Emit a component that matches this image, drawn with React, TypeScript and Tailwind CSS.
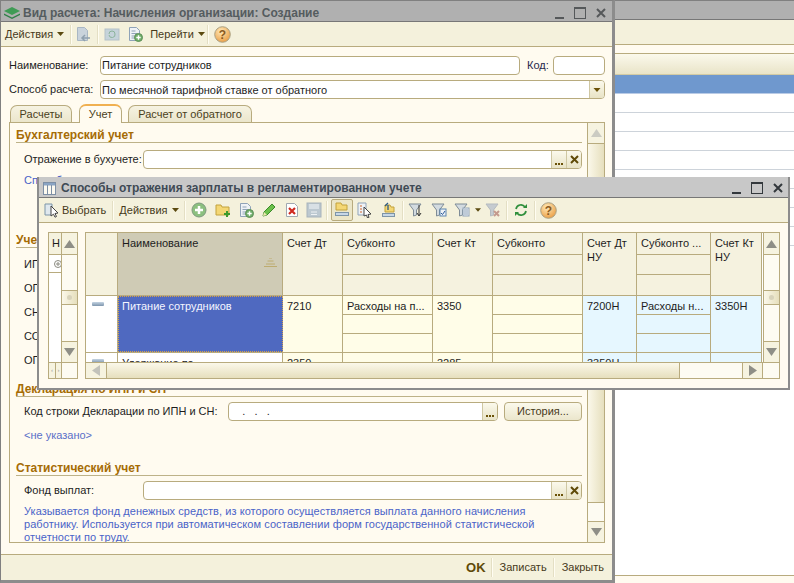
import React from "react";

const Caret = ({ c = "#5b4a10", w = 7 }: { c?: string; w?: number }) => (
  <svg width={w} height="4" viewBox="0 0 7 4" className="shrink-0"><path d="M0 0h7L3.500 4z" fill={c} /></svg>
);
const Sep = ({ l, r }: { l: number; r: number }) => (
  <div className="w-[2px] h-[19px] shrink-0 bg-[#e4dfc4] border-r border-[#fffdf2]" style={{ marginLeft: l, marginRight: r }} />
);
const Help = () => (
  <svg width="17" height="17" viewBox="0 0 17 17" className="shrink-0">
    <defs><radialGradient id="hg" cx="0.4" cy="0.3" r="0.8"><stop offset="0" stopColor="#ffe9b8" /><stop offset="1" stopColor="#e8973a" /></radialGradient></defs>
    <circle cx="8.500" cy="8.500" r="7.800" fill="url(#hg)" stroke="#a9a184" />
    <text x="8.500" y="13" textAnchor="middle" fontSize="12" fontWeight="700" fill="#8a5a20" fontFamily="Liberation Sans">?</text>
  </svg>
);
const Doc = ({ c = "#8fa3b8", f = "#eef2f6" }: { c?: string; f?: string }) => (
  <path d="M2.500 1.500h7l3 3v10h-10z" fill={f} stroke={c} />
);
const Lines = ({ c = "#8fa3b8" }: { c?: string }) => <path d="M4.500 5h4M4.500 7.500h6M4.500 10h6M4.500 12h4" stroke={c} fill="none" />;
const I = ({ children, w = 16 }: { children: React.ReactNode; w?: number }) => (
  <svg width={w} height="16" viewBox={`0 0 ${w} 16`} className="shrink-0">{children}</svg>
);
const Plus = ({ x = 11.5, y = 11.5 }: { x?: number; y?: number }) => (
  <g><circle cx={x} cy={y} r="4" fill="#6fae6a" stroke="#5d8f58" /><path d={`M${x - 2.2} ${y}h4.400M${x} ${y - 2.2}v4.400`} stroke="#fff" strokeWidth="1.400" /></g>
);
const Funnel = ({ c = "#7f8c97" }: { c?: string }) => <path d="M1 2h12L8.500 8v5l-3 1V8z" fill="#d3dbe0" stroke={c} />;

const border = "border-[#b8ab7e]";

const Field = ({ value, dots, x, w, className = "" }: { value?: string; dots?: boolean; x?: boolean; w?: number; className?: string }) => (
  <div className={`h-[19px] flex items-stretch bg-white border border-[#b8ab7e] rounded-[4px] overflow-hidden ${className}`} style={w ? { width: w } : undefined}>
    <div className="flex-1 min-w-0 pl-[1px] leading-[17px] text-[#1d1d1d] whitespace-pre">{value}</div>
    {dots && (
      <div className="w-[15px] border-l border-[#cfc7a2] bg-gradient-to-b from-[#fbf9ec] to-[#e8e3c6] flex items-end justify-center pb-[3px] gap-[1px]">
        <span className="w-[2px] h-[2px] bg-[#6b5208]" /><span className="w-[2px] h-[2px] bg-[#6b5208]" /><span className="w-[2px] h-[2px] bg-[#6b5208]" />
      </div>
    )}
    {x && (
      <div className="w-[15px] border-l border-[#cfc7a2] bg-gradient-to-b from-[#fbf9ec] to-[#e8e3c6] flex items-center justify-center">
        <svg width="9" height="9" viewBox="0 0 9 9"><path d="M1 1l7 7M8 1L1 8" stroke="#5f4a08" strokeWidth="2" /></svg>
      </div>
    )}
  </div>
);

const Heading = ({ children, className = "" }: { children: React.ReactNode; className?: string }) => (
  <div className={`h-[15px] border-b border-[#bdb288] font-bold text-[12px] text-[#a66c05] leading-[15px] whitespace-nowrap ${className}`}>{children}</div>
);

const Tri = ({ up, c = "#8e8e86" }: { up?: boolean; c?: string }) => (
  <svg width="11" height="8" viewBox="0 0 11 8"><path d={up ? "M5.500 0L11 8H0z" : "M0 0h11L5.500 8z"} fill={c} /></svg>
);

const VScroll = () => (
  <div className={`w-[16px] shrink-0 flex flex-col border-l ${border}`}>
    <div className={`h-[22px] shrink-0 flex items-center justify-center border-b ${border} bg-[#f6f3e0]`}><Tri up /></div>
    <div className="h-[35px] shrink-0 bg-[#fdfbf2]" />
    <div className={`h-[15px] shrink-0 bg-gradient-to-r from-[#fbf8ea] to-[#e6dfbd] border-y ${border} flex items-center justify-center`}>
      <span className="w-[5px] h-[5px] rounded-full bg-[#d8d3bb]" />
    </div>
    <div className={`flex-1 bg-[#fdfbf2] border-b ${border}`} />
    <div className="h-[20px] shrink-0 flex items-center justify-center bg-[#f6f3e0]"><Tri /></div>
  </div>
);

const WinBtns = ({ c = "#55585a" }: { c?: string }) => (
  <div className="flex items-center gap-[10px]">
    <svg width="9" height="12" viewBox="0 0 9 12"><rect x="0" y="10" width="9" height="2" fill={c} /></svg>
    <svg width="12" height="12" viewBox="0 0 12 12"><rect x=".5" y=".5" width="11" height="11" fill="none" stroke={c} /><rect x="0" y="0" width="12" height="2" fill={c} /></svg>
    <svg width="10" height="10" viewBox="0 0 10 10"><path d="M1 1l8 8M9 1L1 9" stroke={c} strokeWidth="2" /></svg>
  </div>
);

const Tab = ({ label, active, w, ml }: { label: string; active?: boolean; w: number; ml: number }) => (
  <div
    className={`flex items-center justify-center border border-b-0 ${border} rounded-t-[7px] ${active ? "h-[19px] bg-[#fffbf0] border-t-2 border-t-[#f0b050] -mb-px z-10" : "h-[17px] bg-gradient-to-b from-[#f6f3e2] to-[#ebe6cc]"} text-[#4a3f20]`}
    style={{ width: w, marginLeft: ml }}
  >
    {label}
  </div>
);

const MainWindow = () => (
  <div className="absolute left-0 top-0 w-[615px] h-[583px] flex flex-col bg-[#fffbf0] border-l border-[#808080] border-r-[3px] border-r-[#8c8c8c] border-b-[3px] border-b-[#8c8c8c] border-t border-t-[#808080] overflow-hidden">
    <div className="h-[21px] shrink-0 bg-[#b0b0b0] flex items-center pl-[2px] pr-[6px] pt-[3px] border-b border-[#777]">
      <svg width="18" height="12" viewBox="0 0 18 12" className="shrink-0"><path d="M9 0l8 4-8 4-8-4z" fill="#3f9b55" /><path d="M1 6.500l8 4 8-4v1.500l-8 4-8-4z" fill="#2f7f47" /></svg>
      <div className="ml-[2px] font-bold text-[#555c5f] text-[12px] leading-4 whitespace-nowrap flex-1">Вид расчета: Начисления организации: Создание</div>
      <WinBtns />
    </div>
    <div className="h-[25px] shrink-0 bg-[#f4f1dc] border-b border-[#b8ab7e] flex items-center pl-[4px] text-[#46391a]">
      <span>Действия</span><span className="ml-[4px]"><Caret /></span>
      <Sep l={6} r={3} />
      <I><Doc c="#a9b7c4" f="#c9d3dc" /><path d="M7 12h8M10 9l-3 3 3 3" stroke="#8fa0ae" fill="none" strokeWidth="1.500" /></I>
      <Sep l={6} r={5} />
      <I><rect x="1" y="3" width="14" height="11" fill="#c5d3da" stroke="#b3c1c8" /><path d="M5 8a3 3 0 0 1 6 0M11 8a3 3 0 0 1-6 1" stroke="#8bb39a" fill="none" /></I>
      <span className="ml-[7px]"><I><Doc /><Lines /><Plus /></I></span>
      <span className="ml-[7px]">Перейти</span><span className="ml-[4px]"><Caret /></span>
      <Sep l={2} r={5} />
      <Help />
    </div>
    <div className="flex-1 min-h-0 flex flex-col pl-[8px] pr-[7px] pt-[9px] text-[#1d1d1d]">
      <div className="h-[19px] flex items-center">
        <span className="w-[91px] shrink-0">Наименование:</span>
        <Field value="Питание сотрудников" className="flex-1" />
        <span className="ml-[7px] w-[26px] shrink-0 text-[#26264a]">Код:</span>
        <Field w={52} />
      </div>
      <div className="h-[19px] mt-[5px] flex items-center">
        <span className="w-[91px] shrink-0">Способ расчета:</span>
        <div className="flex-1 h-[19px] flex bg-white border border-[#b8ab7e] rounded-[4px] overflow-hidden">
          <div className="flex-1 pl-[1px] leading-[18px]">По месячной тарифной ставке от обратного</div>
          <div className="w-[15px] border-l border-[#cfc7a2] bg-gradient-to-b from-[#fbf9ec] to-[#e8e3c6] flex items-center justify-center"><Caret c="#6b5208" w={8} /></div>
        </div>
      </div>
      <div className="h-[23px] shrink-0 flex items-end">
        <Tab label="Расчеты" w={62} ml={1} />
        <Tab label="Учет" w={43} ml={7} active />
        <Tab label="Расчет от обратного" w={124} ml={6} />
      </div>
      <div className={`w-[596px] h-[421px] shrink-0 flex border ${border} overflow-hidden`}>
        <div className="flex-1 min-w-0 pl-[6px] pr-[5px] overflow-hidden">
          <Heading className="mt-[5px]">Бухгалтерский учет</Heading>
          <div className="h-[19px] mt-[7px] flex items-center pl-[8px]">
            <span className="w-[119px] shrink-0">Отражение в бухучете:</span>
            <Field dots x className="flex-1" />
          </div>
          <div className="mt-[5px] pl-[8px] h-[13px] leading-[13px] text-[#4a63c8] whitespace-nowrap">Способы отражения зарплаты</div>
          <Heading className="mt-[46px]">Учет ИПН и СН</Heading>
          <div className="pl-[8px] mt-[9px] flex flex-col gap-[10px] leading-[14px]">
            <div>ИПН:</div><div>ОПВ:</div><div>СН:</div><div>СО:</div><div>ОППВ:</div>
          </div>
          <Heading className="mt-[15px]">Декларация по ИПН и СН</Heading>
          <div className="h-[19px] mt-[5px] flex items-center pl-[8px]">
            <span className="w-[204px] shrink-0 whitespace-nowrap">Код строки Декларации по ИПН и СН:</span>
            <Field value="    .   .   ." dots className="w-[270px]" />
            <div className={`ml-[6px] flex-1 h-[19px] border ${border} rounded-[4px] bg-gradient-to-b from-[#fbf9ec] to-[#ebe6cc] text-center leading-[17px] text-[#46391a]`}>История...</div>
          </div>
          <div className="mt-[7px] pl-[8px] leading-[14px] text-[#5a6fc8]">&lt;не указано&gt;</div>
          <Heading className="mt-[19px]">Статистический учет</Heading>
          <div className="h-[19px] mt-[5px] flex items-center pl-[8px]">
            <span className="w-[119px] shrink-0">Фонд выплат:</span>
            <Field dots x className="flex-1" />
          </div>
          <div className="mt-[5px] pl-[8px] leading-[13px] tracking-[0.06px] text-[#4a63c8]">
            <div className="whitespace-nowrap">Указывается фонд денежных средств, из которого осуществляется выплата данного начисления</div>
            <div className="whitespace-nowrap">работнику. Используется при автоматическом составлении форм государственной статистической</div>
            <div className="whitespace-nowrap">отчетности по труду.</div>
          </div>
        </div>
        <div className={`w-[17px] shrink-0 flex flex-col border-l ${border}`}>
          <div className={`h-[21px] flex items-center justify-center border-b ${border} bg-[#f6f3e0]`}><Tri up c="#cbcbc2" /></div>
          <div className={`h-[359px] bg-gradient-to-r from-[#fbf8ea] to-[#e6dfbd] border-b ${border}`} />
          <div className={`h-[19px] bg-[#fdfbf2] border-b ${border}`} />
          <div className="flex-1 flex items-center justify-center bg-[#f6f3e0]"><Tri /></div>
        </div>
      </div>
    </div>
    <div className="h-[26px] shrink-0 bg-[#f4f1dc] border-t border-[#b8ab7e] flex items-center justify-end pr-[8px] text-[#46391a]">
      <span className="font-bold text-[13px] text-[#5f4a08]">OK</span>
      <Sep l={5} r={7} />
      <span>Записать</span>
      <Sep l={6} r={7} />
      <span>Закрыть</span>
    </div>
  </div>
);

const BackWindow = () => (
  <div className="absolute left-[615px] top-0 w-[179px] h-[583px] flex flex-col bg-white">
    <div className="h-[20px] bg-[#b0b0b0] border-t border-t-[#808080] border-b border-b-[#777]" />
    <div className="h-[25px] bg-[#f4f1dc] border-b border-[#b8ab7e]" />
    <div className="h-[9px] bg-[#fffbf0] border-b border-[#b8ab7e]" />
    <div className="h-[21px] bg-gradient-to-b from-[#fbf9ec] to-[#e9e4c8] border-b border-[#d3cba4]" />
    <div className="h-[19px] bg-[#6f98ce] border-b border-[#b9cbe6]" />
    {[0, 1, 2, 3, 4, 5, 6, 7].map((i) => (
      <div key={i} className="h-[19px] bg-white border-b border-[#cdd3da]" />
    ))}
    <div className="flex-1" />
    <div className="h-[8px] bg-[#fffbf0] border-t border-[#b8ab7e]" />
  </div>
);

const Cell = ({ w, bg, text, sub, h, head }: { w: number; bg: string; text: string; sub?: boolean; h: number; head?: boolean }) => (
  <div className={`shrink-0 border-r ${border} flex flex-col overflow-hidden`} style={{ width: w, height: h, background: bg }}>
    {sub ? (
      <>
        <div className={`${head ? "h-[22px]" : "h-[19px]"} shrink-0 border-b ${border} pl-[4px] pt-[3px] leading-[14px] whitespace-nowrap`}>{text}</div>
        <div className={`${head ? "h-[20px]" : "h-[19px]"} shrink-0 border-b ${border}`} />
        <div className="flex-1" />
      </>
    ) : (
      <div className="pl-[4px] pt-[3px] leading-[14px]">{text}</div>
    )}
  </div>
);

const hdrBg = "#f5f2df";
const yel = "#fffde8";
const blu = "#e6f7ff";
const cols = [
  { w: 60, h: "Счет Дт", a: "7210", b: "2350", bg: yel },
  { w: 90, h: "Субконто", a: "Расходы на п...", b: "", bg: yel, sub: true },
  { w: 60, h: "Счет Кт", a: "3350", b: "3285", bg: yel },
  { w: 90, h: "Субконто", a: "", b: "", bg: yel, sub: true },
  { w: 54, h: "Счет Дт НУ", a: "7200Н", b: "3350Н", bg: blu },
  { w: 74, h: "Субконто ...", a: "Расходы н...", b: "", bg: blu, sub: true },
  { w: 51, h: "Счет Кт НУ", a: "3350Н", b: "", bg: blu },
];

const Dialog = () => (
  <div className="absolute left-[37px] top-[177px] w-[753px] h-[213px] flex flex-col bg-[#fffbf0] border-2 border-[#8c8c8c] border-t-0 overflow-hidden">
    <div className="h-[21px] shrink-0 bg-[#c8c8c8] border-b border-[#777] flex items-center pl-[4px] pr-[5px] pt-[2px]">
      <svg width="13" height="13" viewBox="0 0 13 13" className="shrink-0"><rect x=".5" y=".5" width="12" height="12" fill="#fdfaf0" stroke="#7d8fa5" /><rect x="1" y="1" width="11" height="2.500" fill="#8aa4c4" /><path d="M4.500 3v9M8.500 3v9" stroke="#7d8fa5" /></svg>
      <div className="ml-[5px] flex-1 font-bold text-[#3f4a55] text-[12px] leading-4 whitespace-nowrap">Способы отражения зарплаты в регламентированном учете</div>
      <WinBtns c="#33383c" />
    </div>
    <div className="h-[25px] shrink-0 bg-[#f4f1dc] border-b border-[#b8ab7e] flex items-center pl-[5px] text-[#46391a]">
      <I><path d="M1 2h7v11H1z" fill="#dfe8ee" stroke="#7d95a8" /><path d="M7 4l7 7-3 .5 1.500 3-1.500.7-1.500-3L7 14z" fill="#fff" stroke="#444" /></I>
      <span className="ml-[2px]">Выбрать</span>
      <Sep l={6} r={5} />
      <span>Действия</span><span className="ml-[4px]"><Caret /></span>
      <Sep l={5} r={5} />
      <I><circle cx="8" cy="8" r="7" fill="#8cc07f" stroke="#7f9a80" /><path d="M4 8h8M8 4v8" stroke="#fff" strokeWidth="2.500" /></I>
      <span className="ml-[8px]"><I><path d="M1 3h5l1 2h7v8H1z" fill="#f4d774" stroke="#c2a23c" /><path d="M9 12h6M12 9v6" stroke="#3c9a2c" strokeWidth="2" /></I></span>
      <span className="ml-[7px]"><I><Doc /><Lines /><Plus /></I></span>
      <span className="ml-[7px]"><I><path d="M2 14l1-4 8-8 3 3-8 8z" fill="#6cc04a" stroke="#3b8a2a" /><path d="M2 14l1-4 3 3z" fill="#f2e7b5" /></I></span>
      <span className="ml-[7px]"><I><path d="M2.500 1.500h8l3 3v10h-11z" fill="#fff" stroke="#a0a8b0" /><path d="M5 6l6 6M11 6l-6 6" stroke="#cf2a20" strokeWidth="2.200" /></I></span>
      <span className="ml-[6px]"><I><rect x="1" y="1" width="14" height="14" fill="#bcc8d0" stroke="#a7b3bb" /><rect x="3" y="2" width="10" height="5" fill="#d8e0e5" /><path d="M5 10h6M5 12.500h6" stroke="#eef1f3" /></I></span>
      <Sep l={4} r={3} />
      <div className="w-[22px] h-[22px] shrink-0 flex items-center justify-center bg-[#ebe6c8] border border-[#b8ab7e] rounded-[2px]">
        <I><path d="M2 1h5l1 2h5v5H2z" fill="#f4d774" stroke="#c2a23c" /><rect x="1.500" y="10.500" width="13" height="3" fill="#c7d7e6" stroke="#7d95a8" /></I>
      </div>
      <span className="ml-[4px]"><I><path d="M1 1h8v12H1z" fill="#eef2f6" stroke="#8fa3b8" /><path d="M3 4h2M3 7h2M3 10h2" stroke="#d0662c" /><path d="M7 5l7 7-3 .5 1 3-1.500.5-1-3L7 14z" fill="#fff" stroke="#444" /></I></span>
      <span className="ml-[7px]"><I><path d="M5 3h5l1 2h3v5H5z" fill="#f4d774" stroke="#c2a23c" /><rect x="2.500" y="11.500" width="12" height="3" fill="#c7d7e6" stroke="#7d95a8" /><path d="M8 8V3M5 4l3-3" stroke="#2a5a8a" fill="none" strokeWidth="1.300" /></I></span>
      <Sep l={6} r={4} />
      <I><Funnel /><path d="M11 3v10M9 11l2 3 2-3" stroke="#333" fill="none" /></I>
      <span className="ml-[7px]"><I><Funnel /><rect x="9" y="7" width="6" height="7" fill="#eef2f6" stroke="#5d85b0" /><path d="M10 11l1.500 1.500L14 9" stroke="#2a5a9a" fill="none" /></I></span>
      <span className="ml-[7px]"><I><Funnel /><rect x="9" y="6" width="6" height="8" fill="#eef2f6" stroke="#8fa3b8" /><path d="M10 8h4M10 10h4M10 12h4" stroke="#8fa3b8" /></I></span>
      <span className="ml-[5px]"><Caret c="#5b4a10" w={6} /></span>
      <span className="ml-[4px]"><I><path d="M1 2h12L8.500 8v5l-3 1V8z" fill="#c5cbd0" stroke="#b5bbc0" /><path d="M9 9l5 5M14 9l-5 5" stroke="#c49a8e" strokeWidth="2" /></I></span>
      <Sep l={5} r={5} />
      <I><path d="M3 7a5 5 0 0 1 9-2" fill="none" stroke="#2f8f3c" strokeWidth="1.700" /><path d="M13 9a5 5 0 0 1-9 2" fill="none" stroke="#2f8f3c" strokeWidth="1.700" /><path d="M10 6h4V2zM6 10H2v4z" fill="#2f8f3c" /></I>
      <Sep l={5} r={4} />
      <Help />
    </div>
    <div className="flex-1 min-h-0 flex pl-[9px] pt-[9px] text-[#1d1d1d]">
      <div className={`w-[30px] h-[147px] shrink-0 border ${border} flex flex-col bg-white overflow-hidden`}>
        <div className="flex-1 min-h-0 flex">
          <div className="w-[12px] shrink-0 flex flex-col">
            <div className={`h-[22px] bg-[#f5f2df] border-b ${border} pl-[3px] leading-[20px] overflow-hidden`}>Н</div>
            <div className={`h-[18px] border-b ${border} pl-[5px] pt-[5px]`}>
              <svg width="8" height="8" viewBox="0 0 8 8"><circle cx="4" cy="4" r="3.500" fill="#fff" stroke="#8a8a80" /><path d="M2 4h4M4 2v4" stroke="#8a8a80" /></svg>
            </div>
          </div>
          <VScroll />
        </div>
        <div className={`h-[16px] shrink-0 border-t ${border} flex bg-[#f6f3e0]`}>
          <div className={`w-[7px] border-r ${border} flex items-center justify-center text-[6px] text-[#999]`}>‹</div>
          <div className={`w-[6px] border-r ${border} flex items-center justify-center text-[6px] text-[#999]`}>›</div>
          <div className="flex-1 bg-[#fdfbf2]" />
        </div>
      </div>
      <div className={`ml-[7px] w-[695px] h-[147px] shrink-0 border ${border} flex flex-col bg-white overflow-hidden`}>
        <div className="flex-1 min-h-0 flex">
          <div className="w-[676px] shrink-0 flex flex-col overflow-hidden">
            <div className={`h-[63px] shrink-0 flex border-b ${border}`}>
              <div className={`w-[32px] shrink-0 bg-[#f5f2df] border-r ${border}`} />
              <div className={`w-[165px] shrink-0 bg-[#cfcbb5] border-r ${border} relative pl-[4px] pt-[3px] leading-[14px]`}>
                Наименование
                <svg width="13" height="9" viewBox="0 0 13 9" className="absolute right-[5px] top-[25px]"><path d="M5 0h3M3.500 3h6M2 6h9M0 8.500h13" stroke="#bdac70" /></svg>
              </div>
              {cols.map((c, i) => (
                <Cell key={i} w={c.w} h={62} bg={hdrBg} text={c.h} sub={c.sub} head />
              ))}
            </div>
            <div className={`h-[57px] shrink-0 flex border-b ${border}`}>
              <div className={`w-[32px] shrink-0 bg-white border-r ${border} pl-[6px] pt-[6px]`}>
                <div className="w-[12px] h-[4px] rounded-[1px] bg-gradient-to-b from-[#c5d4e2] to-[#7d95ad]" />
              </div>
              <div className={`w-[165px] shrink-0 bg-[#4f69c0] border border-dotted border-[#d6a24a] pl-[3px] pt-[2px] leading-[14px] text-[#f4f6ff]`}>Питание сотрудников</div>
              {cols.map((c, i) => (
                <Cell key={i} w={c.w} h={56} bg={c.bg} text={c.a} sub={c.sub} />
              ))}
            </div>
            <div className="flex-1 min-h-0 flex overflow-hidden">
              <div className={`w-[32px] shrink-0 bg-white border-r ${border} pl-[6px] pt-[6px]`}>
                <div className="w-[12px] h-[4px] rounded-[1px] bg-gradient-to-b from-[#c5d4e2] to-[#7d95ad]" />
              </div>
              <div className={`w-[165px] shrink-0 bg-white border-r ${border} pl-[4px] pt-[3px] leading-[14px]`}>Удержание по</div>
              {cols.map((c, i) => (
                <Cell key={i} w={c.w} h={56} bg={c.bg} text={c.b} sub={c.sub} />
              ))}
            </div>
          </div>
          <div className="w-[1px] shrink-0 bg-white" />
          <VScroll />
        </div>
        <div className={`h-[16px] shrink-0 border-t ${border} flex`}>
          <div className={`w-[21px] shrink-0 bg-[#f6f3e0] border-r ${border} flex items-center justify-center`}>
            <svg width="8" height="11" viewBox="0 0 8 11"><path d="M8 0v11L0 5.500z" fill="#c2c2ba" /></svg>
          </div>
          <div className={`w-[573px] shrink-0 bg-gradient-to-b from-[#fbf8ea] to-[#e6dfbd] border-r ${border}`} />
          <div className="w-[62px] shrink-0 bg-[#fdfbf2]" />
          <div className={`w-[21px] shrink-0 bg-[#f6f3e0] border-x ${border} flex items-center justify-center`}>
            <svg width="8" height="11" viewBox="0 0 8 11"><path d="M0 0v11L8 5.500z" fill="#8e8e86" /></svg>
          </div>
          <div className="flex-1 bg-[#fdfbf2]" />
        </div>
      </div>
    </div>
  </div>
);

export default function App() {
  return (
    <div className="relative w-[794px] h-[583px] overflow-hidden bg-white font-['Liberation_Sans',Arial,sans-serif] text-[11px]">
      <BackWindow />
      <MainWindow />
      <Dialog />
    </div>
  );
}
